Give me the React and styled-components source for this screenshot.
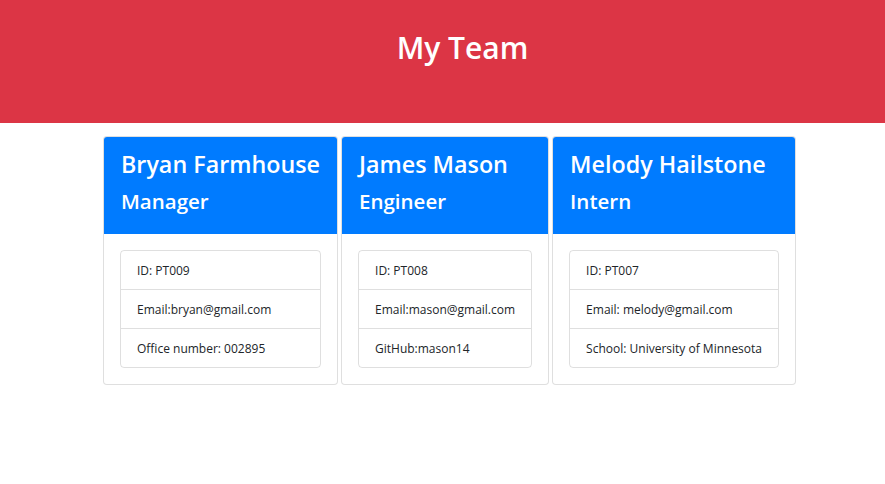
import React from 'react';
import styled, { createGlobalStyle } from 'styled-components';

const team = [
    { name: 'Bryan Farmhouse', role: 'Manager', lines: ['ID: PT009', 'Email:bryan@gmail.com', 'Office number: 002895'] },
    { name: 'James Mason', role: 'Engineer', lines: ['ID: PT008', 'Email:mason@gmail.com', 'GitHub:mason14'] },
    { name: 'Melody Hailstone', role: 'Intern', lines: ['ID: PT007', 'Email: melody@gmail.com', 'School: University of Minnesota'] },
];

const GlobalStyle = createGlobalStyle`
    body {
        margin: 0;
        background: #fff;
        font-family: "Open Sans", "Noto Sans", sans-serif;
        color: #212529;
    }
`;

const App = () => {
    return (
        <>
            <GlobalStyle />
            <Jumbotron>
                <PageTitle>My Team</PageTitle>
            </Jumbotron>
            <CardRow>
                {team.map(member => (
                    <Card key={member.name}>
                        <CardHeader>
                            <Name>{member.name}</Name>
                            <Role>{member.role}</Role>
                        </CardHeader>
                        <CardBody>
                            <List>
                                {member.lines.map(line => (
                                    <ListItem key={line}>{line}</ListItem>
                                ))}
                            </List>
                        </CardBody>
                    </Card>
                ))}
            </CardRow>
        </>
    );
};

const Jumbotron = styled.header`
    background: #dc3545;
    height: 123px;
    display: flex;
    justify-content: center;
    padding-top: 26px;
    box-sizing: border-box;
    padding-left: 40px;
`;

const PageTitle = styled.h1`
    margin: 0;
    color: #fff;
    font-size: 30px;
    font-weight: 600;
    line-height: 44px;
`;

const CardRow = styled.main`
    display: flex;
    justify-content: center;
    align-items: flex-start;
    gap: 3px;
    margin-top: 13px;
    padding-left: 14px;
`;

const Card = styled.section`
    border: 1px solid rgba(0, 0, 0, 0.125);
    border-radius: 4px;
    overflow: hidden;
    background: #fff;
`;

const CardHeader = styled.div`
    background: #007bff;
    color: #fff;
    padding: 10px 17px 0;
    height: 97px;
    box-sizing: border-box;
`;

const Name = styled.h2`
    margin: 0;
    font-size: 23.3px;
    font-weight: 600;
    line-height: 34px;
    white-space: nowrap;
`;

const Role = styled.h3`
    margin: 5px 0 0;
    font-size: 20.5px;
    font-weight: 600;
    line-height: 30px;
`;

const CardBody = styled.div`
    padding: 16px;
`;

const List = styled.ul`
    list-style: none;
    margin: 0;
    padding: 0;
    border: 1px solid rgba(0, 0, 0, 0.125);
    border-radius: 4px;
`;

const ListItem = styled.li`
    padding: 11px 16px 9px;
    font-size: 12px;
    line-height: 18px;
    white-space: nowrap;
    & + & {
        border-top: 1px solid rgba(0, 0, 0, 0.125);
    }
`;

export default App;
